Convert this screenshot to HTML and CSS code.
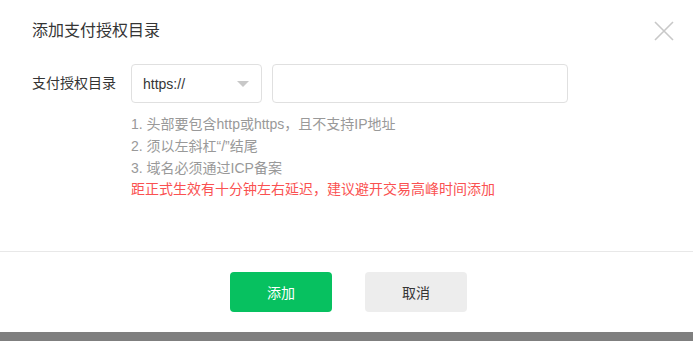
FILE: index.html
```html
<!DOCTYPE html>
<html lang="zh-CN">
<head>
    <meta charset="UTF-8">
    <title>添加支付授权目录</title>
    <link rel="stylesheet" href="styles.css">
</head>
<body>
    <div class="dialog">
        <div class="dialog-hd">
            <h3 class="dialog-title">添加支付授权目录</h3>
            <span class="close">
                <svg width="20" height="20" viewBox="0 0 20 20">
                    <path d="M1 1 L19 19 M19 1 L1 19" stroke="#c8c8c8" stroke-width="1.6" fill="none"/>
                </svg>
            </span>
        </div>

        <div class="dialog-bd">
            <div class="form-row">
                <label class="form-label">支付授权目录</label>
                <div class="form-controls">
                    <div class="select">
                        <span>https://</span>
                        <i class="arrow"></i>
                    </div>
                    <input type="text" class="input">
                </div>
            </div>
            <div class="tips">
                <p>1. 头部要包含http或https，且不支持IP地址</p>
                <p>2. 须以左斜杠“/”结尾</p>
                <p>3. 域名必须通过ICP备案</p>
                <p class="warn">距正式生效有十分钟左右延迟，建议避开交易高峰时间添加</p>
            </div>
        </div>

        <div class="dialog-ft">
            <button class="btn btn-primary">添加</button>
            <button class="btn btn-default">取消</button>
        </div>
    </div>
    <div class="mask"></div>
</body>
</html>
```

FILE: styles.css
```css
body {
    margin: 0;
    padding: 0;
    font-family: "Liberation Sans", "Noto Sans CJK SC", sans-serif;
    font-size: 14px;
    color: #353535;
    background: #fff;
}
.dialog {
    height: 332px;
    display: flex;
    flex-direction: column;
    background: #fff;
}
.dialog-hd {
    display: flex;
    justify-content: space-between;
    align-items: center;
    padding: 20px 19px 0 32px;
    height: 22px;
}
.dialog-title {
    margin: 0;
    font-size: 16px;
    font-weight: normal;
    line-height: 22px;
}
.close {
    display: flex;
    width: 20px;
    height: 20px;
}
.dialog-bd {
    flex: 1;
    padding: 22px 32px 0;
}
.form-row {
    display: flex;
    align-items: center;
}
.form-label {
    width: 99px;
    line-height: 39px;
}
.form-controls {
    display: flex;
    gap: 10px;
}
.select, .input {
    box-sizing: border-box;
    height: 39px;
    border: 1px solid #e0e0e0;
    border-radius: 4px;
    background: #fff;
}
.select {
    width: 131px;
    display: flex;
    align-items: center;
    justify-content: space-between;
    padding: 0 12px 0 11px;
}
.arrow {
    width: 0;
    height: 0;
    border-left: 6px solid transparent;
    border-right: 6px solid transparent;
    border-top: 6px solid #c8c8c8;
}
.input {
    width: 296px;
    outline: none;
}
.tips {
    margin: 10px 0 0 99px;
    color: #999;
    line-height: 22px;
}
.tips p {
    margin: 0;
}
.tips .warn {
    color: #fa5151;
    line-height: 20px;
}
.dialog-ft {
    border-top: 1px solid #e8e8e8;
    display: flex;
    justify-content: center;
    gap: 33px;
    padding: 20px 0 20px 4px;
}
.btn {
    width: 102px;
    height: 40px;
    border: none;
    border-radius: 4px;
    font-family: inherit;
    font-size: 14px;
    cursor: pointer;
}
.btn-primary {
    background: #07c160;
    color: #fff;
}
.btn-default {
    background: #ededed;
    color: #353535;
}
.mask {
    height: 9px;
    background: #7f7f7f;
}
```
